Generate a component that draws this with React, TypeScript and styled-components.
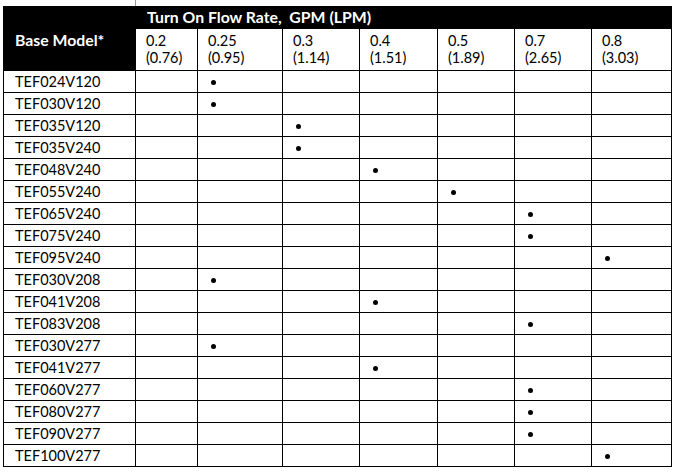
import styled, { createGlobalStyle } from "styled-components";

const GlobalStyle = createGlobalStyle`
  html, body {
    margin: 0;
    padding: 0;
    background: #fff;
  }
  body {
    font-family: Lato, "Liberation Sans", sans-serif;
    color: #000;
  }
`;

const Page = styled.div`
  width: 680px;
  height: 475px;
  padding-left: 3px;
  box-sizing: border-box;
  overflow: hidden;
`;

const TopEdge = styled.div`
  display: flex;
  height: 6px;
  .gap {
    width: 132px;
  }
  .tick {
    width: 1px;
    background: #9a9a9a;
  }
`;

const Grid = styled.table`
  border-collapse: collapse;
  table-layout: fixed;
  width: 668px;
  font-size: 14.5px;

  td,
  th {
    border: 1px solid #000;
    padding: 0 0 0 11px;
    height: 21px;
    line-height: 21px;
    text-align: left;
    white-space: nowrap;
    overflow: hidden;
    box-sizing: border-box;
  }

  tr {
    height: 22px;
  }
`;

const HeadCell = styled.th<{ $tall?: boolean }>`
  background: #000;
  color: #fff;
  font-weight: 700;
  font-size: 15.8px;
  vertical-align: ${(p) => (p.$tall ? "middle" : "top")};
  && {
    padding-top: ${(p) => (p.$tall ? "3px" : "0")};
    line-height: ${(p) => (p.$tall ? "20px" : "19px")};
  }
`;

const RateCell = styled.th`
  font-weight: 400;
  vertical-align: top;
  && {
    height: 42px;
    line-height: 17px;
    padding: 3px 0 0 10px;
  }
`;

const ModelCell = styled.td`
  && {
    padding-left: 11px;
  }
`;

const MarkCell = styled.td`
  vertical-align: middle;
  && {
    padding-left: 13px;
  }
`;

const Dot = styled.span`
  display: block;
  width: 5px;
  height: 5px;
  border-radius: 50%;
  background: #000;
  margin-top: 2px;
`;

const rates = [
  ["0.2", "(0.76)"],
  ["0.25", "(0.95)"],
  ["0.3", "(1.14)"],
  ["0.4", "(1.51)"],
  ["0.5", "(1.89)"],
  ["0.7", "(2.65)"],
  ["0.8", "(3.03)"],
];

const colWidths = [132, 62, 85, 77, 78, 77, 77, 80];

const models: [string, number][] = [
  ["TEF024V120", 1],
  ["TEF030V120", 1],
  ["TEF035V120", 2],
  ["TEF035V240", 2],
  ["TEF048V240", 3],
  ["TEF055V240", 4],
  ["TEF065V240", 5],
  ["TEF075V240", 5],
  ["TEF095V240", 6],
  ["TEF030V208", 1],
  ["TEF041V208", 3],
  ["TEF083V208", 5],
  ["TEF030V277", 1],
  ["TEF041V277", 3],
  ["TEF060V277", 5],
  ["TEF080V277", 5],
  ["TEF090V277", 5],
  ["TEF100V277", 6],
];

const App = () => {
  return (
    <>
      <GlobalStyle />
      <Page>
        <TopEdge>
          <div className="gap" />
          <div className="tick" />
        </TopEdge>
        <Grid>
          <colgroup>
            {colWidths.map((w, i) => (
              <col key={i} style={{ width: w }} />
            ))}
          </colgroup>
          <thead>
            <tr>
              <HeadCell rowSpan={2} $tall>
                Base Model*
              </HeadCell>
              <HeadCell colSpan={7}>Turn On Flow Rate,&nbsp; GPM (LPM)</HeadCell>
            </tr>
            <tr style={{ height: 42 }}>
              {rates.map(([gpm, lpm]) => (
                <RateCell key={gpm}>
                  {gpm}
                  <br />
                  {lpm}
                </RateCell>
              ))}
            </tr>
          </thead>
          <tbody>
            {models.map(([name, col]) => (
              <tr key={name}>
                <ModelCell>{name}</ModelCell>
                {rates.map((_, i) => (
                  <MarkCell key={i}>{i === col ? <Dot /> : null}</MarkCell>
                ))}
              </tr>
            ))}
          </tbody>
        </Grid>
      </Page>
    </>
  );
};

export default App;
